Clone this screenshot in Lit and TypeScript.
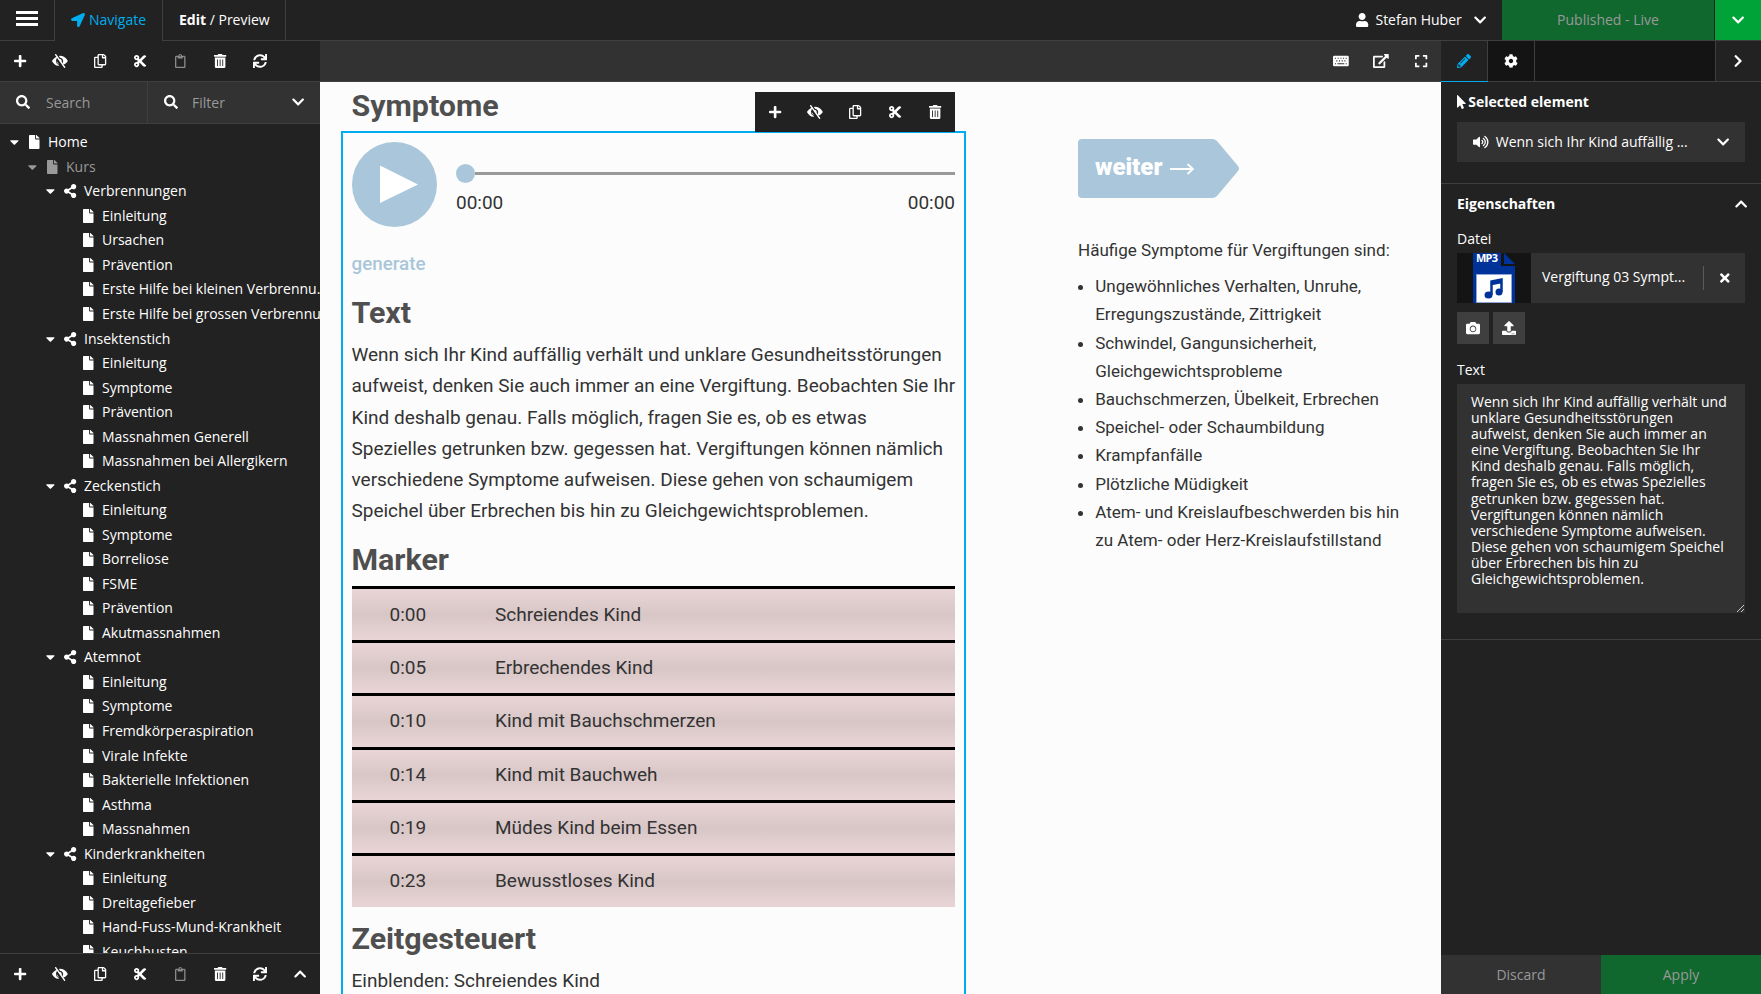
import { LitElement, html, css, svg, nothing } from "lit";
import { customElement, property } from "lit/decorators.js";

const CHEVRON = "M207.029 381.476L12.686 187.132c-9.373-9.373-9.373-24.569 0-33.941l22.667-22.667c9.357-9.357 24.522-9.375 33.901-.04L224 284.505l154.745-154.021c9.379-9.335 24.544-9.317 33.901.04l22.667 22.667c9.373 9.373 9.373 24.569 0 33.941L240.971 381.476c-9.373 9.372-24.569 9.372-33.942 0z";

/** Solid icon set: [view box width, shape]. All icons share a 512 unit height. */
const p = (d: string) => svg`<path d=${d}></path>`;
const ICONS: Record<string, [number, unknown]> = {
  plus: [448, p("M416 208H272V64c0-17.67-14.33-32-32-32h-32c-17.67 0-32 14.33-32 32v144H32c-17.67 0-32 14.33-32 32v32c0 17.67 14.33 32 32 32h144v144c0 17.67 14.33 32 32 32h32c17.67 0 32-14.33 32-32V304h144c17.67 0 32-14.33 32-32v-32c0-17.67-14.33-32-32-32z")],
  hide: [576, svg`<path fill-rule="evenodd" d="M200 90C110 118 42 180 6 242a30 30 0 0 0 0 28c48 86 128 146 222 164l34 3-36-52A144 144 0 0 1 164 185zM250 74l44 62a120 120 0 0 1 98 180l30 74c68-30 118-80 148-120a30 30 0 0 0 0-28C514 138 404 68 288 68zM244 170l92 134a72 72 0 0 0-48-122c-18 0-30-6-44-12z"></path><path d="M130 2c8-6 18-4 24 4l332 468c6 8 4 18-4 24l-16 11c-8 6-18 4-24-4L110 37c-6-8-4-18 4-24z"></path><path d="M168 250l92 132c-54-12-92-62-92-132z" opacity=".75"></path>`],
  copy: [448, p("M433.941 65.941l-51.882-51.882A48 48 0 0 0 348.118 0H176c-26.51 0-48 21.49-48 48v48H48c-26.51 0-48 21.49-48 48v320c0 26.51 21.49 48 48 48h224c26.51 0 48-21.49 48-48v-48h80c26.51 0 48-21.49 48-48V99.882a48 48 0 0 0-14.059-33.941zM266 464H54a6 6 0 0 1-6-6V150a6 6 0 0 1 6-6h74v224c0 26.51 21.49 48 48 48h96v42a6 6 0 0 1-6 6zm128-96H182a6 6 0 0 1-6-6V54a6 6 0 0 1 6-6h106v88c0 13.255 10.745 24 24 24h88v202a6 6 0 0 1-6 6zm6-256h-64V48h9.632c1.591 0 3.117.632 4.243 1.757l48.368 48.368a6 6 0 0 1 1.757 4.243V112z")],
  cut: [448, p("M278.06 256L444.48 89.57c4.69-4.69 4.69-12.29 0-16.97-32.8-32.8-85.99-32.8-118.79 0L210.18 188.12l-24.86-24.86c4.31-10.92 6.68-22.81 6.68-35.26 0-53.02-42.98-96-96-96S0 74.98 0 128s42.98 96 96 96c4.54 0 8.99-.32 13.36-.93L142.29 256l-32.93 32.93c-4.37-.61-8.83-.93-13.36-.93-53.02 0-96 42.98-96 96s42.98 96 96 96 96-42.98 96-96c0-12.45-2.37-24.34-6.68-35.26l24.86-24.86L325.69 439.4c32.8 32.8 85.99 32.8 118.79 0 4.69-4.68 4.69-12.28 0-16.97L278.06 256zM96 160c-17.64 0-32-14.36-32-32s14.36-32 32-32 32 14.36 32 32-14.36 32-32 32zm0 256c-17.64 0-32-14.36-32-32s14.36-32 32-32 32 14.36 32 32-14.36 32-32 32z")],
  paste: [384, p("M336 64h-80c0-35.3-28.7-64-64-64s-64 28.7-64 64H48C21.5 64 0 85.5 0 112v352c0 26.5 21.5 48 48 48h288c26.5 0 48-21.5 48-48V112c0-26.5-21.5-48-48-48zM192 40c13.3 0 24 10.7 24 24s-10.7 24-24 24-24-10.7-24-24 10.7-24 24-24zm144 418c0 3.3-2.7 6-6 6H54c-3.3 0-6-2.7-6-6V118c0-3.3 2.7-6 6-6h42v36c0 6.6 5.4 12 12 12h168c6.6 0 12-5.4 12-12v-36h42c3.3 0 6 2.7 6 6z")],
  trash: [448, p("M32 464a48 48 0 0 0 48 48h288a48 48 0 0 0 48-48V128H32zm272-256a16 16 0 0 1 32 0v224a16 16 0 0 1-32 0zm-96 0a16 16 0 0 1 32 0v224a16 16 0 0 1-32 0zm-96 0a16 16 0 0 1 32 0v224a16 16 0 0 1-32 0zM432 32H312l-9.4-18.7A24 24 0 0 0 281.1 0H166.8a23.72 23.72 0 0 0-21.4 13.3L136 32H16A16 16 0 0 0 0 48v32a16 16 0 0 0 16 16h416a16 16 0 0 0 16-16V48a16 16 0 0 0-16-16z")],
  sync: [512, p("M440.65 12.57l4 82.77A247.16 247.16 0 0 0 255.83 8C134.73 8 33.91 94.92 12.29 209.82A12 12 0 0 0 24.09 224h49.05a12 12 0 0 0 11.67-9.26 175.91 175.91 0 0 1 317-56.94l-101.46-4.86a12 12 0 0 0-12.57 12v47.41a12 12 0 0 0 12 12H500a12 12 0 0 0 12-12V12a12 12 0 0 0-12-12h-47.37a12 12 0 0 0-11.98 12.57zM255.83 432a175.61 175.61 0 0 1-146-77.8l101.8 4.87a12 12 0 0 0 12.57-12v-47.4a12 12 0 0 0-12-12H12a12 12 0 0 0-12 12V500a12 12 0 0 0 12 12h47.35a12 12 0 0 0 12-12.6l-4.15-82.57A247.17 247.17 0 0 0 255.83 504c121.11 0 221.93-86.92 243.55-201.82a12 12 0 0 0-11.8-14.18h-49.05a12 12 0 0 0-11.67 9.26A175.86 175.86 0 0 1 255.83 432z")],
  search: [512, p("M505 442.7L405.3 343c-4.5-4.5-10.6-7-17-7H372c27.6-35.3 44-79.7 44-128C416 93.1 322.9 0 208 0S0 93.1 0 208s93.1 208 208 208c48.3 0 92.7-16.4 128-44v16.3c0 6.4 2.5 12.5 7 17l99.7 99.7c9.4 9.4 24.6 9.4 33.9 0l28.3-28.3c9.4-9.4 9.4-24.6.1-34zM208 336c-70.7 0-128-57.2-128-128 0-70.7 57.2-128 128-128 70.7 0 128 57.2 128 128 0 70.7-57.2 128-128 128z")],
  down: [448, p(CHEVRON)],
  up: [448, svg`<path transform="rotate(180 224 256)" d=${CHEVRON}></path>`],
  right: [448, svg`<path transform="rotate(-90 224 256)" d=${CHEVRON}></path>`],
  file: [384, p("M224 136V0H24C10.7 0 0 10.7 0 24v464c0 13.3 10.7 24 24 24h336c13.3 0 24-10.7 24-24V160H248c-13.2 0-24-10.8-24-24zm160-14.1v6.1H256V0h6.1c6.4 0 12.5 2.5 17 7l97.9 98c4.5 4.5 7 10.6 7 16.9z")],
  share: [448, p("M352 320c-22.608 0-43.387 7.819-59.79 20.895l-102.486-64.054a96.551 96.551 0 0 0 0-41.683l102.486-64.054C308.613 184.181 329.392 192 352 192c53.019 0 96-42.981 96-96S405.019 0 352 0s-96 42.981-96 96c0 7.158.79 14.13 2.276 20.841L155.79 180.895C139.387 167.819 118.608 160 96 160c-53.019 0-96 42.981-96 96s42.981 96 96 96c22.608 0 43.387-7.819 59.79-20.895l102.486 64.054A96.301 96.301 0 0 0 256 416c0 53.019 42.981 96 96 96s96-42.981 96-96-42.981-96-96-96z")],
  caret: [320, p("M31.3 192h257.3c17.8 0 26.7 21.5 14.1 34.1L174.1 354.8c-7.8 7.8-20.5 7.8-28.3 0L17.2 226.1C4.6 213.5 13.5 192 31.3 192z")],
  user: [448, p("M224 256c70.7 0 128-57.3 128-128S294.7 0 224 0 96 57.3 96 128s57.3 128 128 128zm89.6 32h-16.7c-22.2 10.2-46.9 16-72.9 16s-50.6-5.8-72.9-16h-16.7C60.2 288 0 348.2 0 422.4V464c0 26.5 21.5 48 48 48h352c26.5 0 48-21.5 48-48v-41.6c0-74.2-60.2-134.4-134.4-134.4z")],
  arrow: [512, p("M444.52 3.52L28.74 195.42c-47.97 22.39-31.98 92.75 19.19 92.75h175.91v175.91c0 51.17 70.36 67.17 92.75 19.19l191.9-415.78c15.99-38.39-25.59-79.97-63.97-63.97z")],
  keyboard: [576, svg`<path fill-rule="evenodd" d="M48 64h480a48 48 0 0 1 48 48v288a48 48 0 0 1-48 48H48a48 48 0 0 1-48-48V112a48 48 0 0 1 48-48zM70 134v40h40v-40zM168 134v40h40v-40zM268 134v40h40v-40zM366 134v40h40v-40zM464 134v40h40v-40zM120 232v40h40v-40zM218 232v40h40v-40zM318 232v40h40v-40zM416 232v40h40v-40zM70 336v40h40v-40zM164 336v40h248v-40zM464 336v40h40v-40z"></path>`],
  external: [576, p("M576 24v127.984c0 21.461-25.96 31.98-40.971 16.971l-35.707-35.709-243.523 243.523c-9.373 9.373-24.568 9.373-33.941 0l-22.627-22.627c-9.373-9.373-9.373-24.569 0-33.941L442.756 76.676l-35.703-35.705C391.982 25.9 402.656 0 424.024 0H552c13.255 0 24 10.745 24 24zM407.029 270.794l-16 16A23.999 23.999 0 0 0 384 303.765V448H64V128h264a24.003 24.003 0 0 0 16.97-7.029l16-16C376.089 89.851 365.381 64 344 64H48C21.49 64 0 85.49 0 112v352c0 26.51 21.49 48 48 48h352c26.51 0 48-21.49 48-48V287.764c0-21.382-25.852-32.09-40.971-16.97z")],
  expand: [448, p("M0 180V56c0-13.3 10.7-24 24-24h124c6.6 0 12 5.4 12 12v40c0 6.6-5.4 12-12 12H64v84c0 6.6-5.4 12-12 12H12c-6.6 0-12-5.4-12-12zM288 44v40c0 6.6 5.4 12 12 12h84v84c0 6.6 5.4 12 12 12h40c6.6 0 12-5.4 12-12V56c0-13.3-10.7-24-24-24H300c-6.6 0-12 5.4-12 12zm148 276h-40c-6.6 0-12 5.4-12 12v84h-84c-6.6 0-12 5.4-12 12v40c0 6.6 5.4 12 12 12h124c13.3 0 24-10.7 24-24V332c0-6.6-5.4-12-12-12zM160 468v-40c0-6.6-5.4-12-12-12H64v-84c0-6.6-5.4-12-12-12H12c-6.6 0-12 5.4-12 12v124c0 13.3 10.7 24 24 24h124c6.6 0 12-5.4 12-12z")],
  pencil: [512, p("M497.9 142.1l-46.1 46.1c-4.7 4.7-12.3 4.7-17 0l-111-111c-4.7-4.7-4.7-12.3 0-17l46.1-46.1c18.7-18.7 49.1-18.7 67.9 0l60.1 60.1c18.8 18.7 18.8 49.1 0 67.9zM284.2 99.8L21.6 362.4.4 483.9c-2.9 16.4 11.4 30.6 27.8 27.8l121.5-21.3 262.6-262.6c4.7-4.7 4.7-12.3 0-17l-111-111c-4.8-4.7-12.4-4.7-17.1 0zM124.1 339.9c-5.5-5.5-5.5-14.3 0-19.8l154-154c5.5-5.5 14.3-5.5 19.8 0s5.5 14.3 0 19.8l-154 154c-5.5 5.5-14.3 5.5-19.8 0zM88 424h48v36.3l-64.5 11.3-31.1-31.1L51.7 376H88v48z")],
  cog: [512, p("M487.4 315.7l-42.6-24.6c4.3-23.2 4.3-47 0-70.2l42.6-24.6c4.9-2.8 7.1-8.6 5.5-14-11.1-35.6-30-67.8-54.7-94.6-3.8-4.1-10-5.1-14.8-2.3L380.8 110c-17.9-15.4-38.5-27.3-60.8-35.1V25.8c0-5.6-3.9-10.5-9.4-11.7-36.7-8.2-74.3-7.8-109.2 0-5.5 1.2-9.4 6.1-9.4 11.7V75c-22.2 7.9-42.8 19.8-60.8 35.1L88.7 85.5c-4.9-2.8-11-1.9-14.8 2.3-24.7 26.7-43.6 58.9-54.7 94.6-1.7 5.4.6 11.2 5.5 14L67.3 221c-4.3 23.2-4.3 47 0 70.2l-42.6 24.6c-4.9 2.8-7.1 8.6-5.5 14 11.1 35.6 30 67.8 54.7 94.6 3.8 4.1 10 5.1 14.8 2.3l42.6-24.6c17.9 15.4 38.5 27.3 60.8 35.1v49.2c0 5.6 3.9 10.5 9.4 11.7 36.7 8.2 74.3 7.8 109.2 0 5.5-1.2 9.4-6.1 9.4-11.7v-49.2c22.2-7.9 42.8-19.8 60.8-35.1l42.6 24.6c4.9 2.8 11 1.9 14.8-2.3 24.7-26.7 43.6-58.9 54.7-94.6 1.5-5.5-.7-11.3-5.6-14.1zM256 336c-44.1 0-80-35.9-80-80s35.9-80 80-80 80 35.9 80 80-35.9 80-80 80z")],
  pointer: [320, p("M302.189 329.126H196.105l55.831 135.993c3.889 9.428-.555 19.999-9.444 23.999l-49.165 21.427c-9.165 4-19.443-.571-23.332-9.714l-53.053-129.136-86.664 89.138C18.729 472.71 0 463.554 0 447.977V18.299C0 1.899 19.921-6.096 30.277 5.443l284.412 292.542c11.472 11.179 3.007 31.141-12.5 31.141z")],
  volume: [576, svg`<path d="M215.03 71.05L126.06 160H24c-13.26 0-24 10.74-24 24v144c0 13.25 10.74 24 24 24h102.06l88.97 88.95c15.03 15.03 40.97 4.47 40.97-16.97V88.02c0-21.46-25.96-31.98-40.97-16.97z"></path><path fill="none" stroke="currentColor" stroke-width="48" stroke-linecap="round" d="M328 202a64 64 0 0 1 0 108M380 126a156 156 0 0 1 0 260M434 52a246 246 0 0 1 0 408"></path>`],
  times: [352, p("M242.72 256l100.07-100.07c12.28-12.28 12.28-32.19 0-44.48l-22.24-22.24c-12.28-12.28-32.19-12.28-44.48 0L176 189.28 75.93 89.21c-12.28-12.28-32.19-12.28-44.48 0L9.21 111.45c-12.28 12.28-12.28 32.19 0 44.48L109.28 256 9.21 356.07c-12.28 12.28-12.28 32.19 0 44.48l22.24 22.24c12.28 12.28 32.2 12.28 44.48 0L176 322.72l100.07 100.07c12.28 12.28 32.2 12.28 44.48 0l22.24-22.24c12.28-12.28 12.28-32.19 0-44.48L242.72 256z")],
  camera: [512, p("M512 144v288c0 26.5-21.5 48-48 48H48c-26.5 0-48-21.5-48-48V144c0-26.5 21.5-48 48-48h88l12.3-32.9c7-18.7 24.9-31.1 44.9-31.1h125.5c20 0 37.9 12.4 44.9 31.1L376 96h88c26.5 0 48 21.5 48 48zM376 288c0-66.2-53.8-120-120-120s-120 53.8-120 120 53.8 120 120 120 120-53.8 120-120zm-32 0c0 48.5-39.5 88-88 88s-88-39.5-88-88 39.5-88 88-88 88 39.5 88 88z")],
  upload: [512, p("M296 384h-80c-13.3 0-24-10.7-24-24V192h-87.7c-17.8 0-26.7-21.5-14.1-34.1L242.3 5.7c7.5-7.5 19.8-7.5 27.3 0l152.2 152.2c12.6 12.6 3.7 34.1-14.1 34.1H320v168c0 13.3-10.7 24-24 24zm216-8v112c0 13.3-10.7 24-24 24H24c-13.3 0-24-10.7-24-24V376c0-13.3 10.7-24 24-24h136v8c0 30.9 25.1 56 56 56h80c30.9 0 56-25.1 56-56v-8h136c13.3 0 24 10.7 24 24zm-124 88c0-11-9-20-20-20s-20 9-20 20 9 20 20 20 20-9 20-20zm64 0c0-11-9-20-20-20s-20 9-20 20 9 20 20 20 20-9 20-20z")],
};

@customElement("ui-icon")
class UiIcon extends LitElement {
  @property() name = "";
  @property({ type: Number }) size = 14;
  static styles = css`
    :host { display: inline-flex; flex: none; }
    .glyph { display: block; fill: currentColor; overflow: visible; }
  `;
  render() {
    const icon = ICONS[this.name];
    if (!icon) return nothing;
    const [w, shape] = icon;
    return html`<svg class="glyph" width=${(w / 512) * this.size} height=${this.size} viewBox="0 0 ${w} 512">${shape}</svg>`;
  }
}

@customElement("icon-bar")
class IconBar extends LitElement {
  @property({ type: Array }) icons: string[] = [];
  static styles = css`
    :host { display: flex; background: #222; color: #fff; }
    .button { width: 40px; height: 40px; display: flex; align-items: center; justify-content: center; }
    .off { color: #8a8a8a; }
  `;
  render() {
    return this.icons.map((n) => html`<div class="button ${n === "paste" ? "off" : ""}"><ui-icon name=${n}></ui-icon></div>`);
  }
}

const TREE: [string, string[]][] = [
  ["Verbrennungen", ["Einleitung", "Ursachen", "Prävention", "Erste Hilfe bei kleinen Verbrennu...", "Erste Hilfe bei grossen Verbrennungen"]],
  ["Insektenstich", ["Einleitung", "Symptome", "Prävention", "Massnahmen Generell", "Massnahmen bei Allergikern"]],
  ["Zeckenstich", ["Einleitung", "Symptome", "Borreliose", "FSME", "Prävention", "Akutmassnahmen"]],
  ["Atemnot", ["Einleitung", "Symptome", "Fremdkörperaspiration", "Virale Infekte", "Bakterielle Infektionen", "Asthma", "Massnahmen"]],
  ["Kinderkrankheiten", ["Einleitung", "Dreitagefieber", "Hand-Fuss-Mund-Krankheit", "Keuchhusten"]],
];

@customElement("page-tree")
class PageTree extends LitElement {
  static styles = css`
    :host { display: block; overflow: hidden; padding-top: 6px; }
    .row { display: flex; align-items: center; height: 24.54px; white-space: nowrap; }
    .l0 { padding-left: 9.5px; }
    .l1 { padding-left: 27.5px; color: #999; }
    .l2 { padding-left: 45.5px; }
    .l3 { padding-left: 63.5px; }
    .caret { flex: none; width: 9px; display: flex; }
    .type { flex: none; width: 13px; margin: 0 7.5px 0 9px; display: flex; justify-content: center; }
    .l3 .type { margin-left: 18px; }
  `;
  row(level: number, icon: string, label: string) {
    return html`<div class="row l${level}">
      ${level < 3 ? html`<span class="caret"><ui-icon name="caret"></ui-icon></span>` : nothing}
      <span class="type"><ui-icon name=${icon}></ui-icon></span><span>${label}</span>
    </div>`;
  }
  render() {
    return html`${this.row(0, "file", "Home")}${this.row(1, "file", "Kurs")}
      ${TREE.map(([name, pages]) => html`${this.row(2, "share", name)}${pages.map((t) => this.row(3, "file", t))}`)}`;
  }
}

const SPEECH = `Wenn sich Ihr Kind auffällig verhält und unklare Gesundheitsstörungen
aufweist, denken Sie auch immer an eine Vergiftung. Beobachten Sie Ihr
Kind deshalb genau. Falls möglich, fragen Sie es, ob es etwas
Spezielles getrunken bzw. gegessen hat. Vergiftungen können nämlich
verschiedene Symptome aufweisen. Diese gehen von schaumigem
Speichel über Erbrechen bis hin zu Gleichgewichtsproblemen.`;

const MARKERS = [
  ["0:00", "Schreiendes Kind"], ["0:05", "Erbrechendes Kind"], ["0:10", "Kind mit Bauchschmerzen"],
  ["0:14", "Kind mit Bauchweh"], ["0:19", "Müdes Kind beim Essen"], ["0:23", "Bewusstloses Kind"],
];

const SYMPTOMS = [
  "Ungewöhnliches Verhalten, Unruhe, Erregungszustände, Zittrigkeit",
  "Schwindel, Gangunsicherheit, Gleichgewichtsprobleme",
  "Bauchschmerzen, Übelkeit, Erbrechen", "Speichel- oder Schaumbildung", "Krampfanfälle", "Plötzliche Müdigkeit",
  "Atem- und Kreislaufbeschwerden bis hin zu Atem- oder Herz-Kreislaufstillstand",
];

@customElement("page-preview")
class PagePreview extends LitElement {
  static styles = css`
    :host { display: flex; align-items: flex-start; overflow: hidden; background: #fcfcfc; color: #333; font: 18.99px/31.2px Roboto, sans-serif; padding-left: 31.5px; }
    .main { width: 603.5px; position: relative; }
    h2 { margin: 0; font-size: 30.4px; line-height: 36px; font-weight: 700; color: #4f4f4f; }
    .first { padding-top: 6px; height: 43px; }
    .selected { outline: 2px solid #00adee; margin: 0 -9px 0 -8.5px; padding: 9px 9px 40px 8.5px; margin-top: 2px; }
    .tools { position: absolute; right: 0; top: 10px; }
    .player { display: grid; grid-template-columns: 85px 1fr; column-gap: 19.5px; height: 85px; }
    .play { display: block; }
    .track { margin-top: 22px; height: 19px; display: flex; align-items: center; }
    .knob { width: 19px; height: 19px; border-radius: 50%; background: #a9c6da; }
    .rail { flex: 1; height: 3px; background: #999; }
    .times { display: flex; justify-content: space-between; margin-top: 4px; }
    .generate { color: #a9c6da; font-weight: 500; font-size: 18.8px; margin-top: 22px; }
    .text-title { margin-top: 15px; }
    p { margin: 8px -6px 0 0; white-space: pre-line; }
    .marker-title { margin-top: 16px; }
    .markers { margin-top: 8px; }
    .marker { box-sizing: border-box; height: 53.4px; border-top: 3px solid #000; display: grid; grid-template-columns: 105.5px 1fr; align-items: center; padding: 0 0 1px 38px; background: linear-gradient(#e9d5d6, #d8c6c7 50%, #e9d5d6); }
    .timed { margin-top: 14px; }
    .timed-text { margin-top: 8px; }
    .side { margin-left: 123px; width: 340px; padding-top: 57px; font-size: 17.05px; line-height: 28.2px; }
    .next { position: relative; display: flex; width: 161px; height: 59px; }
    .tag { display: block; position: absolute; inset: 0; }
    .next-label { position: relative; padding: 14px 0 0 17px; color: #fff; font-size: 24px; font-weight: 900; display: flex; gap: 7px; align-items: flex-start; }
    .next-arrow { margin-top: 10px; }
    .intro { margin-top: 38px; }
    ul { margin: 8px 0 0; padding-left: 17.2px; }
    li::marker { font-size: 17px; }
  `;
  render() {
    return html`
      <div class="main">
        <h2 class="first">Symptome</h2>
        <div class="selected">
          <div class="player">
            <svg class="play" width="85" height="85"><circle cx="42.5" cy="42.5" r="42.5" fill="#a9c6da"></circle><path d="M28 23.500L66 42.500 28 61z" fill="#fff"></path></svg>
            <div>
              <div class="track"><span class="knob"></span><span class="rail"></span></div>
              <div class="times"><span>00:00</span><span>00:00</span></div>
            </div>
          </div>
          <div class="generate">generate</div>
          <h2 class="text-title">Text</h2>
          <p>${SPEECH}</p>
          <h2 class="marker-title">Marker</h2>
          <div class="markers">${MARKERS.map(([t, l]) => html`<div class="marker"><span>${t}</span><span>${l}</span></div>`)}</div>
          <h2 class="timed">Zeitgesteuert</h2>
          <div class="timed-text">Einblenden: Schreiendes Kind</div>
        </div>
        <icon-bar class="tools" .icons=${["plus", "hide", "copy", "cut", "trash"]}></icon-bar>
      </div>
      <div class="side">
        <div class="next">
          <svg class="tag" width="161" height="59"><path fill="#a9c6da" d="M4 0H134q3 0 5 2L160 27q2 2.500 0 5L139 57q-2 2-5 2H4q-4 0-4-4V4q0-4 4-4z"></path></svg>
          <div class="next-label">weiter
            <svg class="next-arrow" width="24" height="12" fill="none" stroke="#fff" stroke-width="1.800"><path d="M0 6H22M17.500 1L23 6 17.500 11"></path></svg>
          </div>
        </div>
        <div class="intro">Häufige Symptome für Vergiftungen sind:</div>
        <ul>${SYMPTOMS.map((s) => html`<li>${s}</li>`)}</ul>
      </div>`;
  }
}

@customElement("side-inspector")
class SideInspector extends LitElement {
  static styles = css`
    :host { display: flex; flex-direction: column; background: #222; color: #fff; }
    .tabs { display: flex; height: 40px; background: #141414; border-bottom: 1px solid #3f3f3f; }
    .tab { width: 46px; display: flex; align-items: center; justify-content: center; border-right: 1px solid #3f3f3f; }
    .active { background: #222; color: #00adee; box-shadow: 0 1px #00adee; }
    .fold { background: #222; border-right: 0; border-left: 1px solid #3f3f3f; margin-left: auto; width: 45px; }
    .section { padding: 0 16px; border-bottom: 1px solid #3f3f3f; }
    .title { font-weight: 700; display: flex; align-items: center; height: 40px; }
    .title ui-icon { margin-right: 2.5px; }
    .select { height: 40px; background: #323232; display: flex; align-items: center; padding: 0 16px; gap: 7px; margin-bottom: 21px; }
    .select .label { flex: 1; }
    .head { display: flex; justify-content: space-between; align-items: center; height: 40px; font-weight: 700; margin-right: -2px; }
    .field { height: 20px; line-height: 20px; }
    .head + .field { margin-top: 5px; }
    .file { margin-top: 4px; height: 50px; display: flex; background: #323232; align-items: center; }
    .thumb { width: 74px; height: 50px; background: #141414; display: flex; justify-content: center; }
    .name { flex: 1; padding-left: 11px; margin-top: -2px; }
    .remove { width: 41px; height: 24px; display: flex; align-items: center; justify-content: center; border-left: 1px solid #5a5a5a; }
    .actions { display: flex; gap: 4px; margin: 9px 0 16px; }
    .action { width: 32px; height: 32px; background: #3f3f3f; display: flex; align-items: center; justify-content: center; }
    .area { box-sizing: border-box; margin: 4px 0 26px; height: 229px; background: #323232; padding: 10px 14px; line-height: 16.1px; position: relative; }
    .grip { position: absolute; right: 1px; bottom: 1px; }
    .footer { margin-top: auto; display: grid; grid-template-columns: 1fr 1fr; height: 39px; }
    .discard, .apply { display: flex; align-items: center; justify-content: center; color: #999; }
    .discard { background: #323232; }
    .apply { background: #10682f; }
  `;
  render() {
    return html`
      <div class="tabs">
        <div class="tab active"><ui-icon name="pencil"></ui-icon></div>
        <div class="tab"><ui-icon name="cog"></ui-icon></div>
        <div class="tab fold"><ui-icon name="right"></ui-icon></div>
      </div>
      <div class="section">
        <div class="title"><ui-icon name="pointer"></ui-icon>Selected element</div>
        <div class="select"><ui-icon name="volume"></ui-icon><span class="label">Wenn sich Ihr Kind auffällig ...</span><ui-icon name="down"></ui-icon></div>
      </div>
      <div class="section">
        <div class="head">Eigenschaften<ui-icon name="up"></ui-icon></div>
        <div class="field">Datei</div>
        <div class="file">
          <div class="thumb">
            <svg width="42" height="50">
              <path fill="#039" d="M0 0H28V13H42V50H0zM31 0L42 11H31z"></path>
              <path fill="#fff" stroke="#8fa5d5" d="M3.500 21.500H38.500V49.500H3.500z"></path>
              <g fill="none" stroke="#039" stroke-width="2.500"><path d="M18.500 42V28.500L28.500 26.500V39M18.500 31L28.500 29"></path></g>
              <ellipse cx="15.500" cy="42" rx="4" ry="3.500" fill="#039"></ellipse><ellipse cx="26" cy="39" rx="3.500" ry="3.500" fill="#039"></ellipse>
              <text x="3" y="9" fill="#fff" font-family="Noto Sans, sans-serif" font-size="11" font-weight="700" textLength="22">MP3</text>
            </svg>
          </div>
          <span class="name">Vergiftung 03 Sympt...</span>
          <span class="remove"><ui-icon name="times"></ui-icon></span>
        </div>
        <div class="actions"><span class="action"><ui-icon name="camera"></ui-icon></span><span class="action"><ui-icon name="upload"></ui-icon></span></div>
        <div class="field">Text</div>
        <div class="area">${SPEECH}
          <svg class="grip" width="7" height="7" stroke="#ccc"><path d="M0 7L7 0M4 7L7 4"></path></svg>
        </div>
      </div>
      <div class="footer"><div class="discard">Discard</div><div class="apply">Apply</div></div>`;
  }
}

@customElement("app-root")
class AppRoot extends LitElement {
  static styles = css`
    :host { display: grid; grid-template-rows: 41px 1fr; width: 1761px; height: 994px; overflow: hidden; background: #222; color: #fff; font: 14px/20px "Open Sans", "Noto Sans", sans-serif; }
    .top { display: flex; height: 40px; border-bottom: 1px solid #3f3f3f; }
    .cell { display: flex; align-items: center; border-right: 1px solid #3f3f3f; box-sizing: border-box; height: 40px; }
    .menu { width: 55px; padding-left: 16px; }
    .navigate { width: 108px; height: 41px; padding: 0 0 1px 16px; background: #222; color: #00adee; gap: 4px; }
    .mode { width: 123px; padding-left: 16px; white-space: pre; }
    .burger { display: flex; flex-direction: column; gap: 3px; margin-top: -3px; }
    .burger i { display: block; width: 22px; height: 3px; background: #fff; }
    .user { margin-left: auto; display: flex; align-items: center; gap: 7px; padding-right: 16px; }
    .user ui-icon:last-child { margin-left: 5px; }
    .publish { width: 212px; display: flex; align-items: center; justify-content: center; background: #10682f; color: #999; }
    .publish-more { width: 46px; margin-left: 1px; display: flex; align-items: center; justify-content: center; background: #00a338; }
    .body { display: grid; grid-template-columns: 320px 1121px 320px; min-height: 0; }
    .left { display: flex; flex-direction: column; min-height: 0; min-width: 0; }
    .bar { border-bottom: 1px solid #3f3f3f; }
    .filters { display: flex; height: 41px; background: #323232; border-bottom: 1px solid #3f3f3f; color: #999; }
    .filters ui-icon { color: #fff; margin-top: -2px; }
    .find { width: 148px; box-sizing: border-box; border-right: 1px solid #3f3f3f; display: flex; align-items: center; padding-left: 16px; gap: 16px; }
    .filter { flex: 1; display: flex; align-items: center; padding: 0 16px 0 16px; gap: 14px; }
    .filter span { flex: 1; }
    page-tree { flex: 1; min-height: 0; }
    .bottom { border-top: 1px solid #3f3f3f; }
    .center { display: grid; grid-template-rows: 41px 1fr; min-height: 0; }
    .strip { background: #323232; border-bottom: 1px solid #3f3f3f; box-sizing: border-box; display: flex; justify-content: flex-end; }
    .strip div { width: 40px; display: flex; align-items: center; justify-content: center; }
  `;
  render() {
    const tools = ["plus", "hide", "copy", "cut", "paste", "trash", "sync"];
    return html`
      <div class="top">
        <div class="cell menu"><span class="burger"><i></i><i></i><i></i></span></div>
        <div class="cell navigate"><ui-icon name="arrow"></ui-icon>Navigate</div>
        <div class="cell mode"><b>Edit</b> / Preview</div>
        <div class="user"><ui-icon name="user"></ui-icon>Stefan Huber<ui-icon name="down"></ui-icon></div>
        <div class="publish">Published - Live</div>
        <div class="publish-more"><ui-icon name="down"></ui-icon></div>
      </div>
      <div class="body">
        <div class="left">
          <icon-bar class="bar" .icons=${tools}></icon-bar>
          <div class="filters">
            <div class="find"><ui-icon name="search"></ui-icon>Search</div>
            <div class="filter"><ui-icon name="search"></ui-icon><span>Filter</span><ui-icon name="down"></ui-icon></div>
          </div>
          <page-tree></page-tree>
          <icon-bar class="bottom" .icons=${[...tools, "up"]}></icon-bar>
        </div>
        <div class="center">
          <div class="strip"><div><ui-icon name="keyboard"></ui-icon></div><div><ui-icon name="external"></ui-icon></div><div><ui-icon name="expand"></ui-icon></div></div>
          <page-preview></page-preview>
        </div>
        <side-inspector></side-inspector>
      </div>`;
  }
}
